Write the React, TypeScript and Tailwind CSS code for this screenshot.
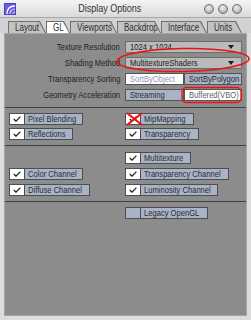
import React from "react";

// Display Options window, GL tab
const tabs = [
  { name: "Layout", w: "w-[38px]", active: false },
  { name: "GL", w: "w-[24px]", active: true },
  { name: "Viewports", w: "w-[47px]", active: false },
  { name: "Backdrop", w: "w-[44px]", active: false },
  { name: "Interface", w: "w-[46px]", active: false },
  { name: "Units", w: "w-[35px]", active: false },
];

// narrow text: the UI font is condensed, squeeze Liberation Sans to match
const N = ({ children, right = false }: { children: React.ReactNode; right?: boolean }) => (
  <span className={`inline-block whitespace-nowrap scale-x-[0.8] ${right ? "origin-right" : "origin-left"}`}>{children}</span>
);

const CheckMark = () => (
  <svg width="8" height="6" viewBox="0 0 8 6">
    <polyline points="0.8,3 3,5.2 7.4,0.6" fill="none" stroke="#1a1a1a" strokeWidth="1.2" />
  </svg>
);

const CheckItem = ({ label, w, checked = true }: { label: string; w: string; checked?: boolean }) => (
  <div className="flex h-[12px] border border-[#4e4e4e]">
    <div className={`w-[15px] flex items-center justify-center border-r border-[#4e4e4e] ${checked ? "bg-white" : "bg-[#a9b3c6]"}`}>
      {checked && <CheckMark />}
    </div>
    <div className={`${w} bg-[#a9b3c6] pl-[3px] text-[9.5px] leading-[10px] text-[#2c2c2c] whitespace-nowrap overflow-hidden`}>
      <N>{label}</N>
    </div>
  </div>
);

const Dropdown = ({ value }: { value: string }) => (
  <div className="h-[12px] flex items-center justify-between bg-[#bababa] border border-[#6c6c6c] pl-[4px] pr-[7px] text-[9.5px] text-[#222]">
    <span className="leading-[10px]"><N>{value}</N></span>
    <span className="w-0 h-0 border-l-[3px] border-r-[3px] border-t-[4px] border-l-transparent border-r-transparent border-t-[#1c1c1c]" />
  </div>
);

const Seg = ({ text, className }: { text: string; className: string }) => (
  <div className={`flex-1 h-[12px] border border-[#555] pl-[4px] text-[9.5px] leading-[10px] overflow-hidden ${className}`}>
    <N>{text}</N>
  </div>
);

const Sep = () => <div className="h-px bg-[#3f3f3f]" />;

export default function App() {
  return (
    <div className="relative w-[251px] h-[320px] bg-[#dcdcdc] flex flex-col font-['Liberation_Sans',Arial,sans-serif] overflow-hidden">
      {/* Title bar */}
      <div className="h-[18px] flex items-center pl-[4px] pr-[9px] bg-gradient-to-b from-[#f4f4f4] to-[#dadada] border-b border-[#a9a9a9]">
        <svg width="12" height="12" viewBox="0 0 12 12">
          <rect width="12" height="12" fill="#4a3fc4" />
          <rect x="1" y="1" width="10" height="10" fill="#6a5ee0" />
          <path d="M3 11 C3 6 6 3 11 3" stroke="#fff" strokeWidth="1.3" fill="none" />
          <path d="M6 11 C6 8 8 6 11 6" stroke="#e0d8ff" strokeWidth="1.1" fill="none" />
          <path d="M9 11 C9 10 10 9 11 9" stroke="#fff" strokeWidth="1" fill="none" />
        </svg>
        <div className="flex-1 flex justify-center text-[10.5px] text-[#333] leading-none">
          <span className="inline-block whitespace-nowrap scale-x-[0.86]">Display Options</span>
        </div>
        <div className="flex gap-[4px]">
          {[0, 1, 2].map((i) => (
            <div
              key={i}
              className="w-[10px] h-[10px] rounded-full border border-[#6e6e6e] bg-[radial-gradient(circle_at_45%_35%,#f0f0f0,#9a9a9a)]"
            />
          ))}
        </div>
      </div>

      {/* Tabs */}
      <div className="h-[15px] flex items-end pl-[8px] bg-[#d2d2d2]">
        {tabs.map((t) => (
          <div
            key={t.name}
            className={`${t.w} h-[12px] bg-[#6f6f6f] [clip-path:polygon(0_0,calc(100%-6px)_0,100%_100%,0_100%)] pt-px pl-px`}
          >
            <div
              className={`h-full ${t.active ? "bg-white" : "bg-[#c3c3c3]"} [clip-path:polygon(0_0,calc(100%-7px)_0,calc(100%-1px)_100%,0_100%)] pl-[6px] text-[10px] leading-[11px] text-[#2e2e2e]`}
            >
              <N>{t.name}</N>
            </div>
          </div>
        ))}
      </div>

      {/* Panel */}
      <div className="flex-1 mx-[4px] mb-[4px] bg-[#8c8c8c] border border-[#a4a4a4] pt-[7px]">
        <div className="grid grid-cols-[115px_117px] gap-x-[5px] gap-y-[4px] text-[9.5px] text-[#1e1e1e]">
          <div className="text-right leading-[12px]"><N right>Texture Resolution</N></div>
          <Dropdown value="1024 x 1024" />
          <div className="text-right leading-[12px]"><N right>Shading Method</N></div>
          <Dropdown value="MultitextureShaders" />
          <div className="text-right leading-[12px]"><N right>Transparency Sorting</N></div>
          <div className="flex">
            <Seg text="SortByObject" className="bg-white text-[#8d98ae]" />
            <Seg text="SortByPolygon" className="bg-[#aab3c6] text-[#2a2a2a]" />
          </div>
          <div className="text-right leading-[12px]"><N right>Geometry Acceleration</N></div>
          <div className="flex">
            <Seg text="Streaming" className="bg-[#aab3c6] text-[#2a2a2a]" />
            <Seg text="Buffered(VBO)" className="bg-white text-[#5d5d66]" />
          </div>
        </div>

        <div className="mt-[6px]">
          <Sep />
        </div>
        <div className="grid grid-cols-[116px_1fr] pl-[4px] gap-y-[3px] mt-[5px]">
          <div className="flex"><CheckItem label="Pixel Blending" w="w-[57px]" /></div>
          <div className="flex"><CheckItem label="MipMapping" w="w-[52px]" /></div>
          <div className="flex"><CheckItem label="Reflections" w="w-[47px]" /></div>
          <div className="flex"><CheckItem label="Transparency" w="w-[57px]" /></div>
        </div>

        <div className="mt-[5px]">
          <Sep />
        </div>
        <div className="grid grid-cols-[116px_1fr] pl-[4px] gap-y-[4px] mt-[6px]">
          <div />
          <div className="flex"><CheckItem label="Multitexture" w="w-[49px]" /></div>
          <div className="flex"><CheckItem label="Color Channel" w="w-[57px]" /></div>
          <div className="flex"><CheckItem label="Transparency Channel" w="w-[87px]" /></div>
          <div className="flex"><CheckItem label="Diffuse Channel" w="w-[64px]" /></div>
          <div className="flex"><CheckItem label="Luminosity Channel" w="w-[76px]" /></div>
        </div>

        <div className="mt-[5px]">
          <Sep />
        </div>
        <div className="grid grid-cols-[116px_1fr] pl-[4px] mt-[5px]">
          <div />
          <div className="flex"><CheckItem label="Legacy OpenGL" w="w-[66px]" checked={false} /></div>
        </div>
      </div>

      {/* Red annotation marks */}
      <svg className="absolute left-0 top-0 pointer-events-none" width="251" height="320">
        <ellipse cx="183" cy="60" rx="66" ry="11.5" transform="rotate(-1 183 60)" fill="none" stroke="#ee1111" strokeWidth="1.6" />
        <rect x="182" y="87.5" width="59" height="15" rx="4" fill="none" stroke="#ee1111" strokeWidth="1.4" />
        <line x1="127" y1="113" x2="142" y2="125" stroke="#ee1111" strokeWidth="2.2" />
        <line x1="142" y1="113" x2="127" y2="125" stroke="#ee1111" strokeWidth="2.2" />
      </svg>
    </div>
  );
}
